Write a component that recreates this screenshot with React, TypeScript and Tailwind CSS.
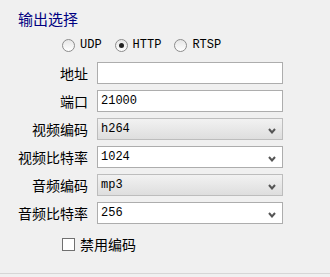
import React from 'react';

const cjk = "font-['Microsoft_YaHei','Noto_Sans_CJK_SC',sans-serif]";
const latin = "font-['Liberation_Mono','Noto_Sans_CJK_SC',monospace]";

const Radio: React.FC<{ label: string; checked?: boolean }> = ({ label, checked }) => (
  <div className="flex items-center">
    <span className="w-[13px] h-[13px] rounded-full border border-[#8c8c8c] bg-gradient-to-b from-[#e6e6e6] to-white flex items-center justify-center">
      {checked && <span className="w-[5px] h-[5px] rounded-full bg-[#222]" />}
    </span>
    <span className={`${latin} text-[12px] text-black ml-[5px]`}>{label}</span>
  </div>
);

const Chevron: React.FC = () => (
  <svg width="8" height="6" viewBox="0 0 8 6" className="absolute right-[6px] top-[9px]">
    <path d="M1 1 L4 4.5 L7 1" stroke="#555" strokeWidth="2" fill="none" />
  </svg>
);

const rows = [
  { label: '地址', value: '', kind: 'input' },
  { label: '端口', value: '21000', kind: 'input' },
  { label: '视频编码', value: 'h264', kind: 'locked' },
  { label: '视频比特率', value: '1024', kind: 'select' },
  { label: '音频编码', value: 'mp3', kind: 'locked' },
  { label: '音频比特率', value: '256', kind: 'select' },
];

const App: React.FC = () => {
  return (
    <div className="w-[330px] h-[277px] bg-[#f0f0f0] flex flex-col relative overflow-hidden">
      {/* title */}
      <div className={`${cjk} text-[15px] leading-[20px] text-[#000080] pl-[18px] pt-[9px]`}>输出选择</div>

      {/* protocol */}
      <div className="flex items-center h-[16px] mt-[8px] pl-[62px] gap-[13px]">
        <Radio label="UDP" />
        <Radio label="HTTP" checked />
        <Radio label="RTSP" />
      </div>

      {/* fields */}
      <div className="flex flex-col gap-[6px] mt-[9px]">
        {rows.map((r) => (
          <div key={r.label} className="flex items-center h-[22px]">
            <div className={`${cjk} w-[89px] text-right text-[14px] text-black pr-[1px]`}>{r.label}</div>
            <div
              className={`relative ml-[8px] w-[186px] h-[22px] border flex items-center pl-[3px] ${
                r.kind === 'locked'
                  ? 'border-[#bdbdbd] bg-gradient-to-b from-[#f2f2f2] to-[#dedede]'
                  : 'border-[#adadad] bg-white'
              }`}
            >
              <span className={`${latin} text-[12px] text-black`}>{r.value}</span>
              {r.kind !== 'input' && <Chevron />}
            </div>
          </div>
        ))}
      </div>

      {/* disable */}
      <div className="flex items-center mt-[10px] pl-[62px]">
        <span className="w-[13px] h-[13px] border border-[#707070] bg-white" />
        <span className={`${cjk} text-[14px] text-black ml-[5px]`}>禁用编码</span>
      </div>

      <div className="absolute left-0 right-0 bottom-[3px] h-px bg-[#d6d6d6]" />
    </div>
  );
};

export default App;
